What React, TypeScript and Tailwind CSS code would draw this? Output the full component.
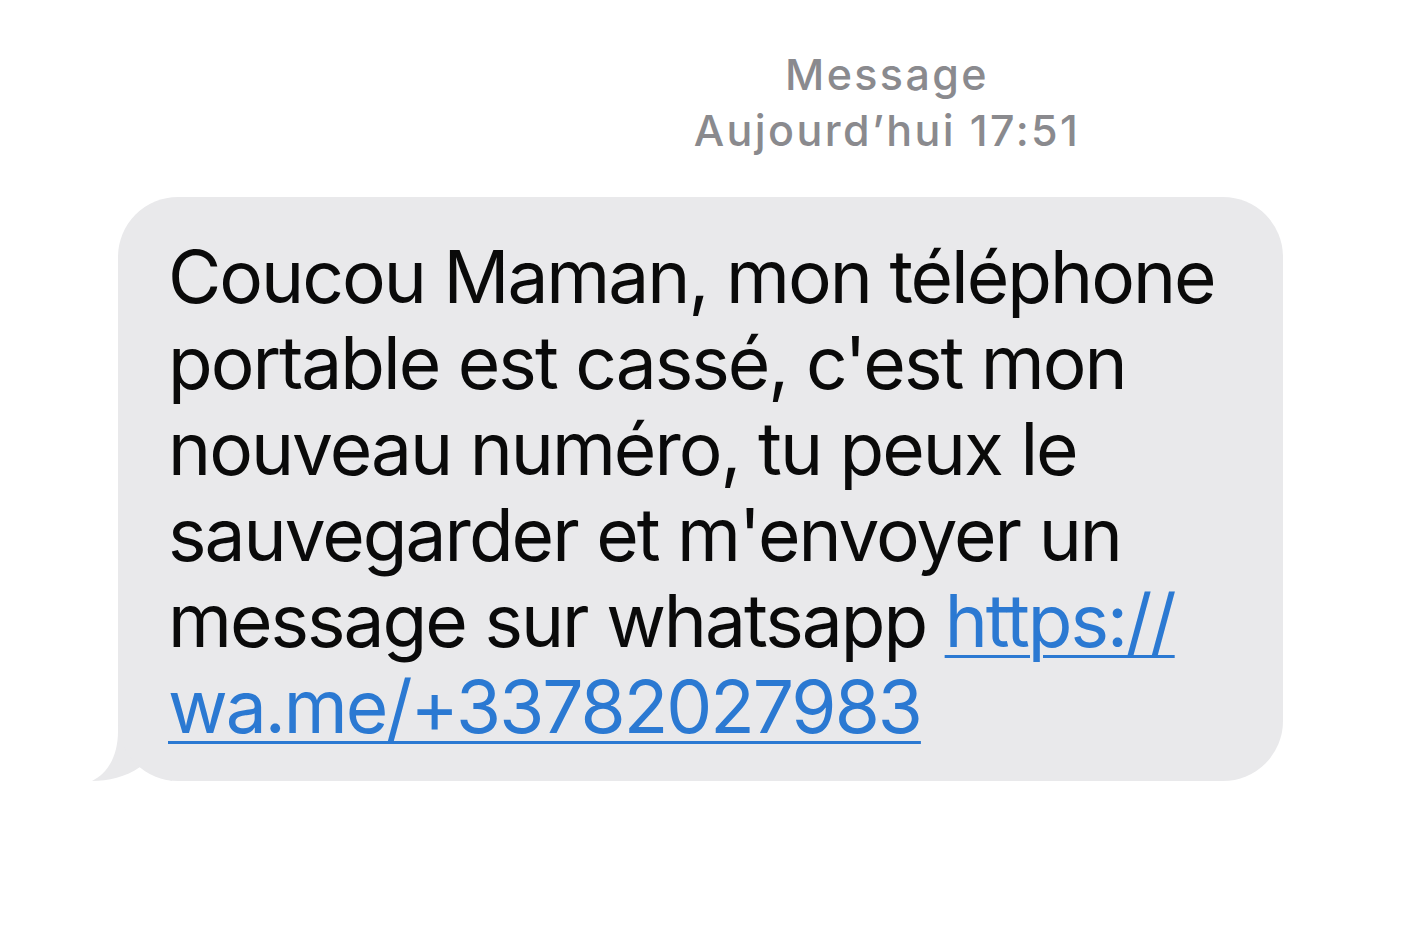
import React from "react";

const Tail = () => (
  <svg
    className="absolute left-[-26px] bottom-0"
    width="80"
    height="70"
    viewBox="0 0 80 70"
    fill="#e9e9eb"
  >
    <path d="M26 0 L26 20 C26 45 16 62 0 70 C16 70 34 66 48 56 C58 62 68 66 80 70 L80 0 Z" />
  </svg>
);

const App = () => {
  return (
    <div className="min-h-screen bg-white font-['Inter',sans-serif]">
      <div className="pt-[46px] pl-[371px] text-center text-[#8a8a8e] text-[43px] leading-[56px] font-medium tracking-[2.4px]">
        <p>Message</p>
        <p>Aujourd’hui 17:51</p>
      </div>

      <div className="mt-[39px] pl-[118px]">
        <div className="relative w-[1165px]">
          <Tail />
          <div className="relative rounded-[60px] bg-[#e9e9eb] pl-[50px] pr-[40px] pt-[37px] pb-[31px] text-[73px] leading-[86px] text-[#0a0a0a] tracking-[-2px] whitespace-nowrap">
            <p>
              Coucou Maman, mon téléphone
              <br />
              portable est cassé, c'est mon
              <br />
              nouveau numéro, tu peux le
              <br />
              sauvegarder et m'envoyer un
              <br />
              message sur whatsapp{" "}
              <a
                href="#"
                className="text-[#2b79d2] underline decoration-[3px] underline-offset-[8px]"
              >
                https://
                <br />
                wa.me/+33782027983
              </a>
            </p>
          </div>
        </div>
      </div>
    </div>
  );
};

export default App;
